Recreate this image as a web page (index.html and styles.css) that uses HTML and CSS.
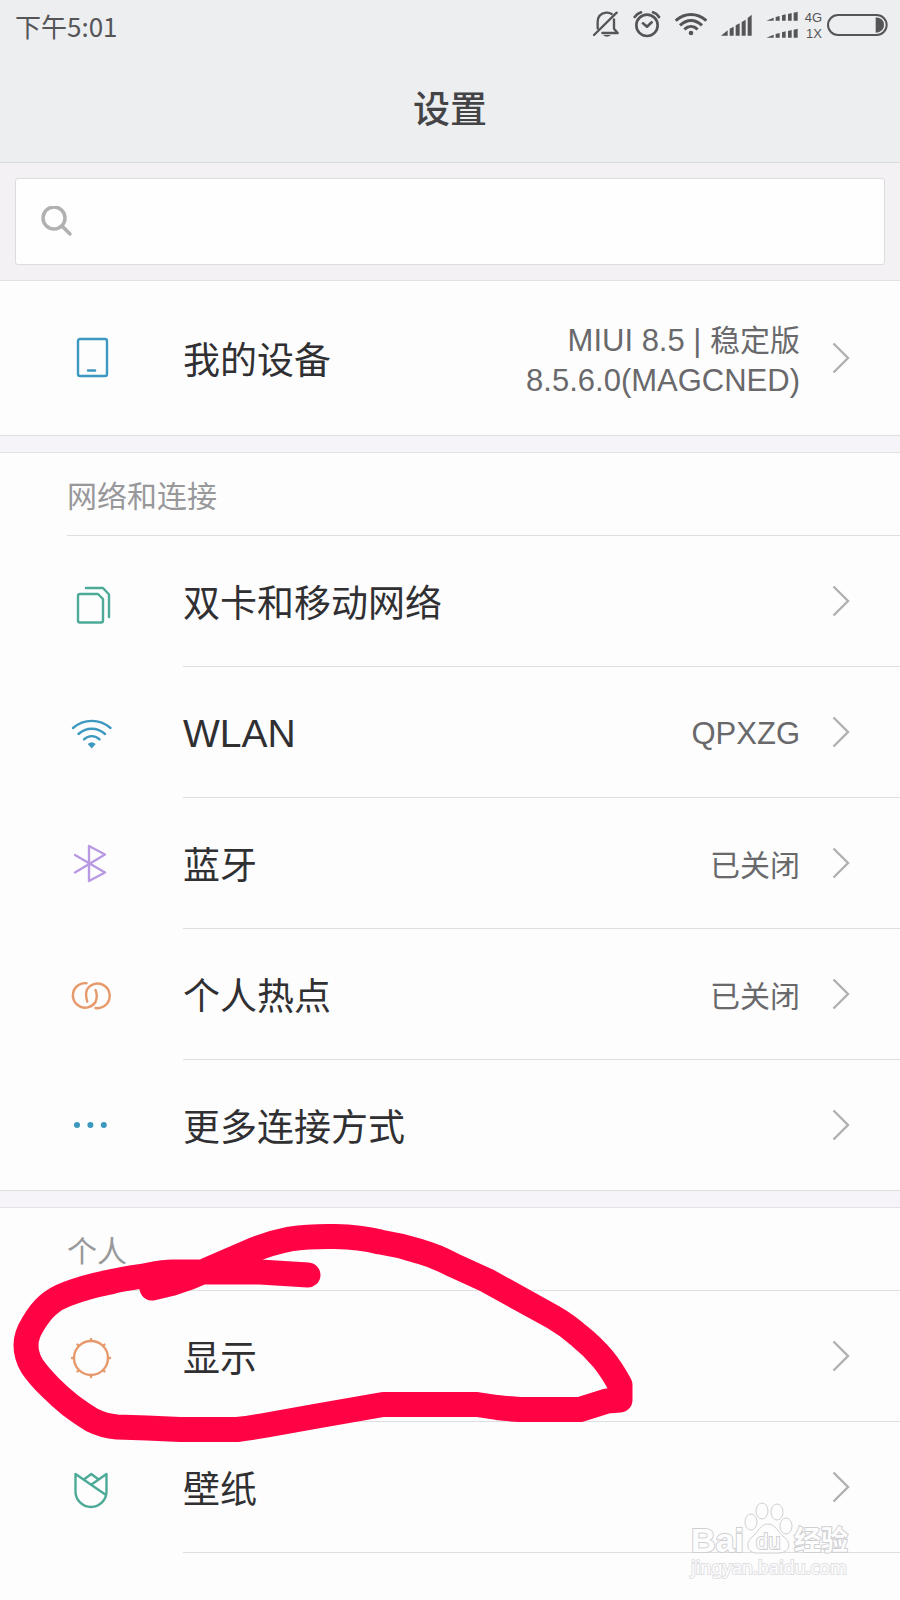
FILE: index.html
```html
<!DOCTYPE html>
<html lang="zh-CN">
<head>
<meta charset="utf-8">
<meta name="viewport" content="width=device-width, initial-scale=1">
<title>设置</title>
<link rel="stylesheet" href="styles.css">
</head>
<body>
<header class="header">
  <div class="status">
    <time class="clock">下午5:01</time>
    <div class="status-icons">
      <svg width="26" height="52" viewBox="36 0 78 156" fill="none" stroke="#555557" stroke-width="7" stroke-linecap="round" stroke-linejoin="round">
        <path d="M39 105L107 38M50 85V66C50 50 60 40 76 38Q84 37 92 42M99 58V86L110 99H64"/>
        <path d="M66 105H90Q78 116 66 105Z" fill="#555557" stroke="none"/>
      </svg>
      <svg width="28" height="52" viewBox="156 0 84 156" fill="none" stroke="#555557" stroke-width="8" stroke-linecap="round" stroke-linejoin="round">
        <circle cx="198" cy="76" r="32"/>
        <path d="M186 70L198 80L212 67M161 51Q168 41 180 37M216 37Q228 41 234 51"/>
      </svg>
      <svg width="32" height="52" viewBox="282 0 96 156" fill="none" stroke="#555557" stroke-width="9">
        <path d="M284 62C312 37 348 37 376 62M297 76C318 57 342 57 363 76M310 88C322 77 338 77 350 88"/>
        <circle cx="330" cy="99" r="7" fill="#555557" stroke="none"/>
      </svg>
      <svg width="31" height="52" viewBox="423 0 93 156" fill="#555557">
        <path d="M423 107L443 91V107ZM449 86L461 80V107H449ZM467 76L479 70V107H467ZM485 66L497 59V107H485ZM503 54L515 44V107H503Z"/>
      </svg>
      <div class="carrier">
        <svg width="32" height="52" viewBox="558 0 96 156" fill="#555557">
          <path id="bars" d="M559 62L581 53V62ZM587 51L599 48V62H587ZM606 46L617 43V62H606ZM624 42L635 39V62H624ZM641 38L653 35V62H641Z"/>
          <use href="#bars" y="51"/>
        </svg>
        <div class="net"><span>4G</span><span>1X</span></div>
        <svg width="61" height="52" viewBox="741 0 183 156">
          <rect x="744" y="45" width="176" height="60" rx="30" fill="none" stroke="#555557" stroke-width="6"/>
          <path d="M887 52Q912 54 912 75T887 98Z" fill="#555557"/>
        </svg>
      </div>
    </div>
  </div>
  <h1 class="title">设置</h1>
</header>

<form class="search" role="search">
  <label class="search-box">
    <svg width="32" height="32" viewBox="0 0 32 32" fill="none" stroke="#b1b1b2" stroke-width="3.500" stroke-linecap="round">
      <circle cx="13" cy="12" r="11"/><path d="M21 20L29 28"/>
    </svg>
    <input class="search-input" type="search" aria-label="搜索">
  </label>
</form>

<main>
  <section class="group group-first">
    <a class="row row-tall" href="#device">
      <svg class="icon blue" viewBox="0 0 48 48"><rect x="11" y="5" width="29" height="37" rx="2"/><path d="M21 36.500H28"/></svg>
      <span class="body">
        <span class="label">我的设备</span>
        <span class="value"><span class="latin">MIUI 8.5 | </span>稳定版<br><span class="latin">8.5.6.0(MAGCNED)</span></span>
        <svg class="chevron" viewBox="0 0 18 32"><path d="M1.500 1.500L16 16L1.500 30.500"/></svg>
      </span>
    </a>
  </section>

  <section class="group">
    <h2 class="heading">网络和连接</h2>
    <a class="row" href="#sim">
      <svg class="icon green" viewBox="0 0 48 48"><path d="M13 16H31L36 21V42.500Q36 44.500 34 44.500H13Q11 44.500 11 42.500V18Q11 16 13 16ZM19 10H36L42 16.500V39"/></svg>
      <span class="body">
        <span class="label">双卡和移动网络</span>
        <svg class="chevron" viewBox="0 0 18 32"><path d="M1.500 1.500L16 16L1.500 30.500"/></svg>
      </span>
    </a>
    <a class="row" href="#wlan">
      <svg class="icon blue" viewBox="0 0 48 48"><path d="M6 19C17 9.500 32.500 9.500 43.500 19M11.500 25C19 18 30.500 18 38 25M17 30.300C21.500 26 28 26 32.500 30.300"/><path class="solid" d="M20.700 35Q24.700 31.500 28.700 35L24.700 39.500Z"/></svg>
      <span class="body">
        <span class="label latin">WLAN</span>
        <span class="value latin">QPXZG</span>
        <svg class="chevron" viewBox="0 0 18 32"><path d="M1.500 1.500L16 16L1.500 30.500"/></svg>
      </span>
    </a>
    <a class="row" href="#bluetooth">
      <svg class="icon violet" viewBox="0 0 48 48"><path d="M8 15L38 32.500L22 41V6L38 14.500L8 32.500"/></svg>
      <span class="body">
        <span class="label">蓝牙</span>
        <span class="value">已关闭</span>
        <svg class="chevron" viewBox="0 0 18 32"><path d="M1.500 1.500L16 16L1.500 30.500"/></svg>
      </span>
    </a>
    <a class="row" href="#hotspot">
      <svg class="icon orange" viewBox="0 0 48 48"><path d="M19.500 12.200A12.300 12.300 0 1 0 28.500 31Q31 25 28.500 19M28.500 37A12.300 12.300 0 1 0 20 18.500Q18 24 20.300 30.500"/></svg>
      <span class="body">
        <span class="label">个人热点</span>
        <span class="value">已关闭</span>
        <svg class="chevron" viewBox="0 0 18 32"><path d="M1.500 1.500L16 16L1.500 30.500"/></svg>
      </span>
    </a>
    <a class="row" href="#more">
      <svg class="icon blue" viewBox="0 0 48 48"><g class="solid"><circle cx="10" cy="24" r="3"/><circle cx="23.400" cy="24" r="3"/><circle cx="36.800" cy="24" r="3"/></g></svg>
      <span class="body">
        <span class="label">更多连接方式</span>
        <svg class="chevron" viewBox="0 0 18 32"><path d="M1.500 1.500L16 16L1.500 30.500"/></svg>
      </span>
    </a>
  </section>

  <section class="group group-last">
    <h2 class="heading">个人</h2>
    <a class="row" href="#display">
      <svg class="icon orange" viewBox="0 0 48 48"><circle cx="24" cy="25" r="17"/><path d="M24 8V6M24 42V44M7 25H5M41 25H43M12 13L10.500 11.500M36 13L37.500 11.500M12 37L10.500 38.500M36 37L37.500 38.500"/></svg>
      <span class="body">
        <span class="label">显示</span>
        <svg class="chevron" viewBox="0 0 18 32"><path d="M1.500 1.500L16 16L1.500 30.500"/></svg>
      </span>
    </a>
    <a class="row" href="#wallpaper">
      <svg class="icon green" viewBox="0 0 48 48"><path d="M39 31L8.500 10V27.500A15.500 15.500 0 0 0 39.500 27.500V10L24.500 20.500M17.500 15L24.300 10L31 15"/></svg>
      <span class="body">
        <span class="label">壁纸</span>
        <svg class="chevron" viewBox="0 0 18 32"><path d="M1.500 1.500L16 16L1.500 30.500"/></svg>
      </span>
    </a>
    <svg class="scribble" width="640" height="240" viewBox="0 1208 640 240" aria-hidden="true">
      <path d="M308 1275L260 1272H173C160 1272 150 1275 140 1276.500Q122 1279 110 1282Q85 1287 67 1294Q56 1298 48 1305Q40 1312 33 1324Q26 1335 26 1345Q26 1356 32 1366Q38 1375 50 1387Q60 1397 70 1405Q82 1414 92 1420Q104 1426 117 1427L147 1428L180 1429.500H237Q250 1428 267 1425L320 1415.500L383 1404.500H477L497 1407.500Q510 1409 520 1409.500H580L607 1401L620 1400V1385Q612 1370 603 1359Q593 1347 580 1336.500Q567 1325 553 1317L487 1280.500L453 1265Q436 1256 420 1251.500Q400 1245 380 1242Q360 1237 335 1236.500Q310 1236 290 1239Q270 1243 253 1250L207 1270Q190 1278 173 1283L152 1288"/>
    </svg>
    <svg class="watermark" width="170" height="84" viewBox="0 0 170 84" aria-label="Baidu 经验">
      <ellipse cx="66" cy="23" rx="6" ry="8"/><ellipse cx="77" cy="12" rx="6" ry="8"/><ellipse cx="92" cy="13" rx="6" ry="8"/><ellipse cx="101" cy="27" rx="6" ry="8"/>
      <path d="M83 25C75 25 74 33 67 38C60 44 62 54 72 54H93C105 54 107 44 99 38C92 33 91 25 83 25Z"/>
      <text class="wm-brand" x="6" y="53">Bai</text>
      <text class="wm-du" x="71" y="50">du</text>
      <text class="wm-cn" x="109" y="51">经验</text>
      <text class="wm-url" x="6" y="75">jingyan.baidu.com</text>
    </svg>
  </section>
</main>
</body>
</html>
```
FILE: styles.css
```css
* {
  box-sizing: border-box;
}

body {
  margin: 0;
  background: #fdfdfe;
  color: #303033;
  font-family: "Noto Sans CJK SC", sans-serif;
}

.header {
  background: #edeef0;
  border-bottom: 1px solid #dadadc;
}

.status {
  display: flex;
  align-items: center;
  justify-content: space-between;
  height: 52px;
  padding: 0 12px 0 15px;
  color: #555557;
}

.clock {
  font-size: 26px;
  line-height: 32px;
}

.status-icons {
  display: flex;
  align-items: center;
  gap: 14px;
}

.carrier {
  display: flex;
  align-items: center;
  gap: 5px;
}

.net {
  display: flex;
  flex-direction: column;
  align-items: flex-end;
  width: 19px;
  font: 13px/16px "Liberation Sans", sans-serif;
}

.title {
  display: flex;
  align-items: center;
  justify-content: center;
  height: 110px;
  margin: 0;
  color: #444446;
  font-size: 37px;
  font-weight: 500;
  line-height: 48px;
}

.search {
  padding: 15px;
  background: #f3f1f4;
}

.search-box {
  display: flex;
  align-items: center;
  gap: 16px;
  height: 87px;
  padding: 0 25px;
  background: #fefefe;
  border: 1px solid #dddbde;
  border-radius: 3px;
}

.search-input {
  flex: 1;
  min-width: 0;
  border: 0;
  outline: 0;
  background: transparent;
  font: inherit;
  font-size: 30px;
}

main {
  background: #f6f4f8;
}

.group {
  position: relative;
  margin-bottom: 16px;
  border-top: 1px solid #e2e1e4;
  border-bottom: 1px solid #dfdee1;
  background: #fdfdfe;
}

.group-last {
  margin-bottom: 0;
  padding-bottom: 46px;
  border-bottom: 0;
}

.heading {
  height: 83px;
  margin: 0 0 0 67px;
  border-bottom: 1px solid #dfdee1;
  color: #98989a;
  font-size: 30px;
  font-weight: 400;
  line-height: 82px;
}

.row {
  display: flex;
  align-items: center;
  padding-left: 67px;
  color: inherit;
  text-decoration: none;
}

.icon {
  flex: none;
  width: 48px;
  height: 48px;
  margin-right: 68px;
  fill: none;
  stroke: currentColor;
  stroke-width: 2.4;
  stroke-linecap: round;
  stroke-linejoin: round;
}

.icon .solid {
  fill: currentColor;
  stroke: none;
}

.blue { color: #3d98bf; }
.green { color: #4caa97; }
.violet { color: #b99ae2; }
.orange { color: #e69a6b; }

.body {
  display: flex;
  flex: 1;
  align-items: center;
  height: 131px;
  padding-right: 50px;
  border-bottom: 1px solid #dfdee1;
}

.group .row:last-of-type .body {
  height: 130px;
  border-bottom: 0;
}

.group-last .row:last-of-type .body {
  height: 131px;
  border-bottom: 1px solid #dfdee1;
}

.group .row-tall:last-of-type .body {
  height: 154px;
}

.label {
  flex: 1;
  font-size: 37px;
  line-height: 54px;
}

.label.latin {
  padding-top: 4px;
  font-size: 39px;
}

.value {
  color: #69696b;
  font-size: 30px;
  line-height: 40px;
  text-align: right;
}

.latin {
  font-family: "Liberation Sans", sans-serif;
}

.value .latin {
  font-size: 31px;
  line-height: 1;
}

.value.latin {
  padding-top: 4px;
  font-size: 31px;
}

.chevron {
  flex: none;
  width: 18px;
  height: 32px;
  margin-left: 32px;
  fill: none;
  stroke: #b0b0b2;
  stroke-width: 2.4;
}

.scribble {
  position: absolute;
  top: 0;
  left: 0;
  fill: none;
  stroke: #ff0345;
  stroke-width: 25;
  stroke-linecap: round;
  stroke-linejoin: round;
  pointer-events: none;
}

.watermark {
  position: absolute;
  right: 45px;
  bottom: 16px;
  fill: #fdfdfe;
  stroke: #d0d0d2;
  stroke-width: 1;
  pointer-events: none;
}

.watermark text {
  stroke-width: 2;
  paint-order: stroke;
  font-family: "Liberation Sans", sans-serif;
}

.watermark .wm-brand {
  font-size: 34px;
  font-weight: 700;
}

.watermark .wm-du {
  font-size: 22px;
}

.watermark .wm-cn {
  font-family: "Noto Sans CJK SC", sans-serif;
  font-size: 27px;
  font-weight: 700;
}

.watermark .wm-url {
  font-family: "Noto Sans", sans-serif;
  font-size: 18px;
  stroke: #e0e0e2;
}
```
